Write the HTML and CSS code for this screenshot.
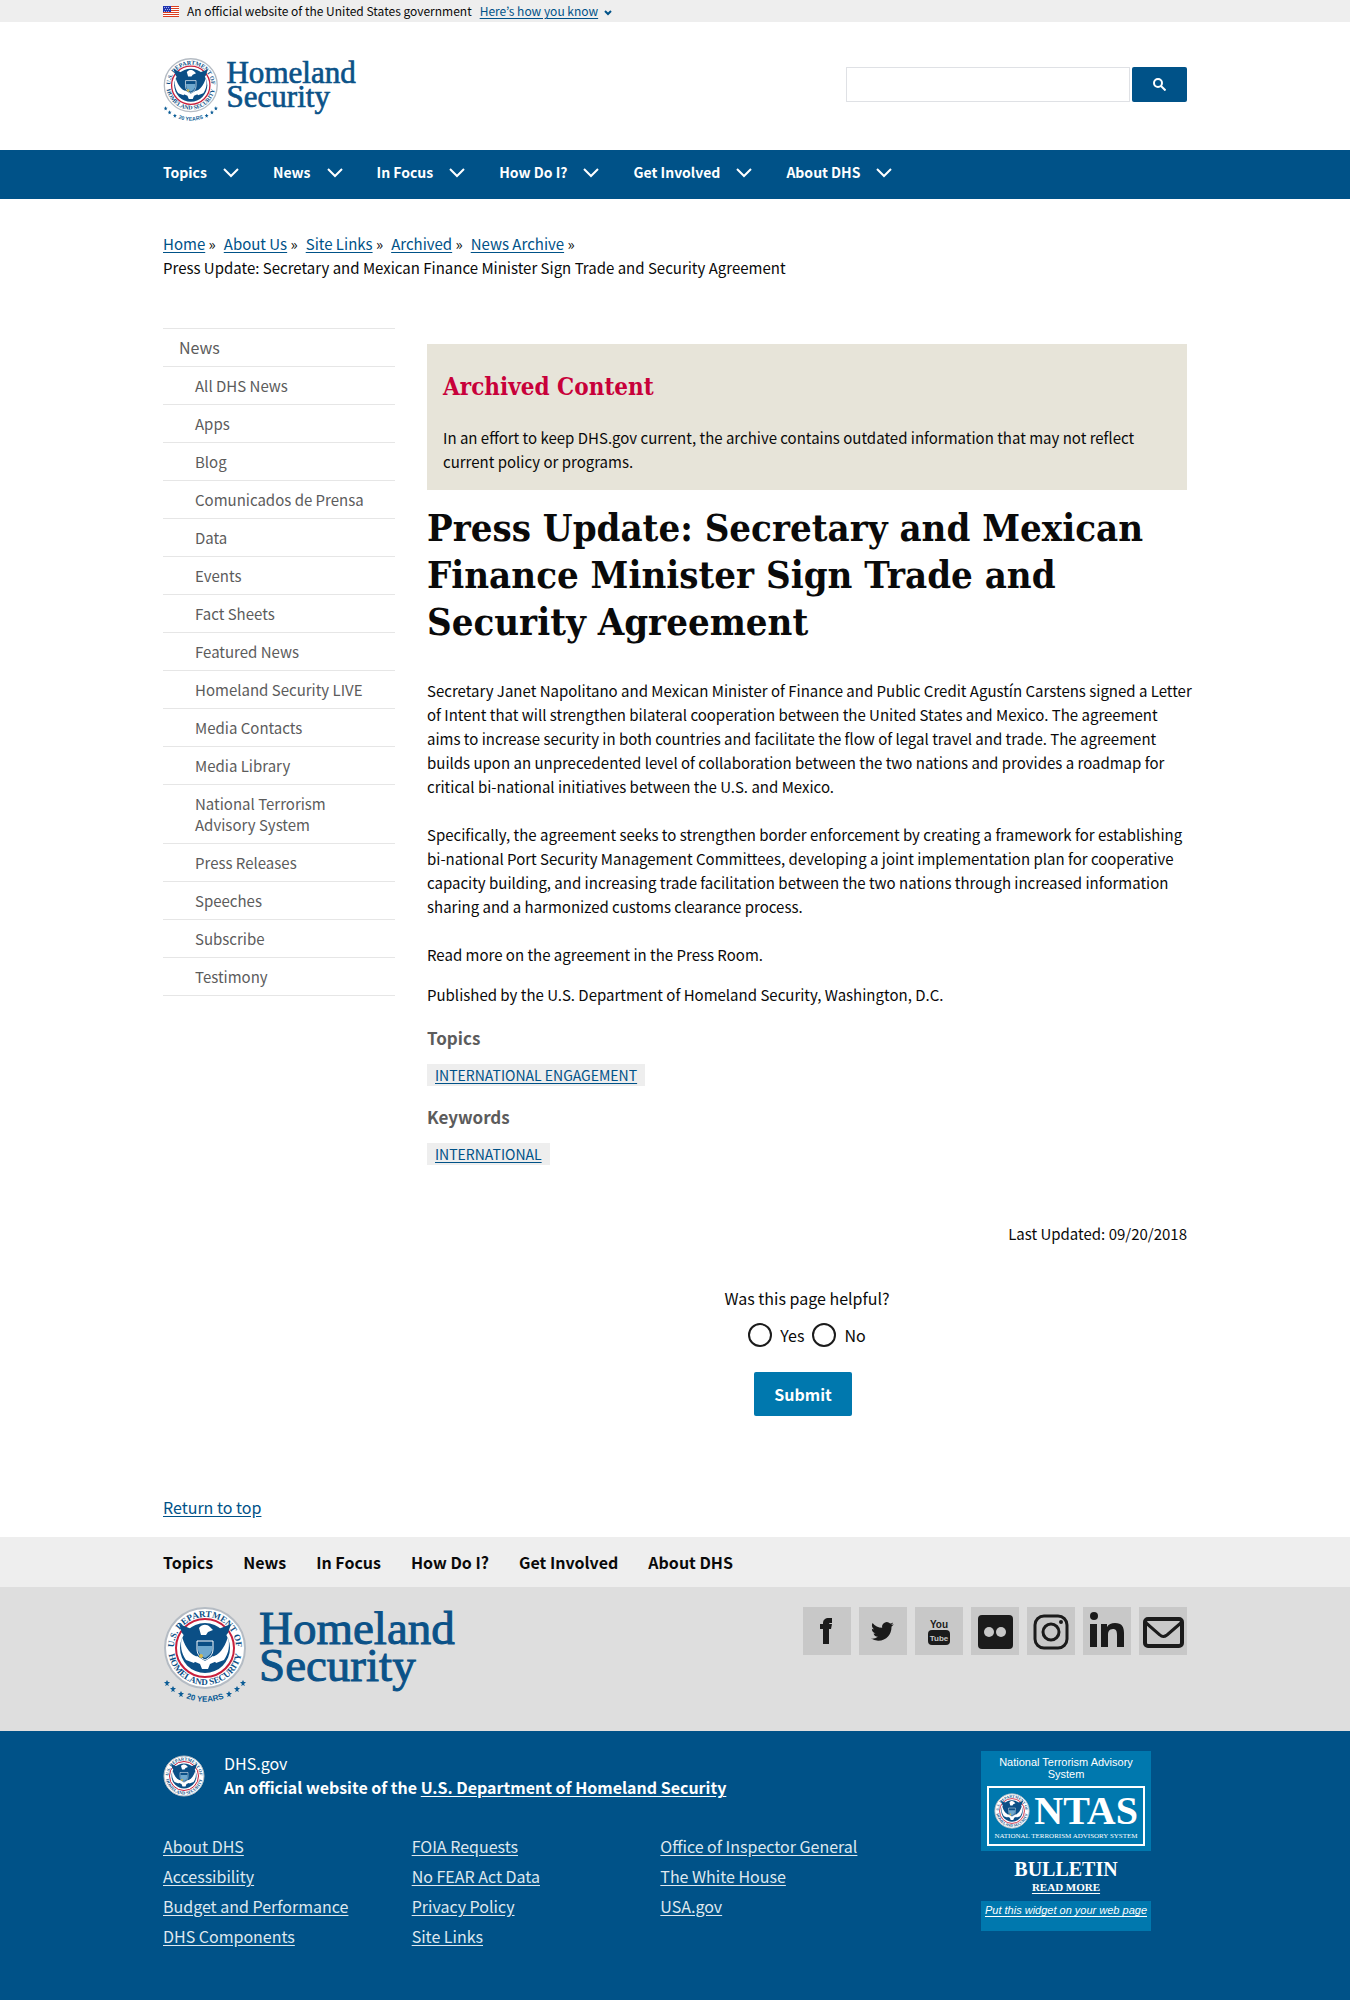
FILE: index.html
```html
<!DOCTYPE html>
<html lang="en">
<head>
<meta charset="utf-8">
<meta name="viewport" content="width=device-width, initial-scale=1">
<title>Press Update: Secretary and Mexican Finance Minister Sign Trade and Security Agreement | Homeland Security</title>
<link rel="stylesheet" href="styles.css">
</head>
<body>
<div class="gov-banner">
  <div class="container gov-inner">
    <svg class="flag" viewBox="0 0 16 11" aria-hidden="true">
      <path fill="#fff" d="M0 0h16v11H0z"/>
      <path fill="#db3e1f" d="M0 0h16v1H0zM0 2h16v1H0zM0 4h16v1H0zM0 6h16v1H0zM0 8h16v1H0zM0 10h16v1H0z"/>
      <path fill="#1e33b1" d="M0 0h8v6H0z"/>
      <path stroke="#fff" stroke-dasharray="1 1" d="M1 1.500h6M2 3.500h5M1 5.500h6" opacity=".6"/>
    </svg>
    <span>An official website of the United States government</span>
    <button type="button" class="gov-toggle">Here’s how you know<svg class="gov-chevron" viewBox="0 0 8 6" aria-hidden="true"><path d="M1 1l3 3 3-3" fill="none" stroke="currentColor" stroke-width="2"/></svg></button>
  </div>
</div>

<header class="site-header">
  <div class="container header-inner">
    <a href="#" aria-label="Homeland Security home">
      <svg class="header-logo" viewBox="0 0 292 98" role="img" aria-label="Homeland Security">
        <defs>
          <path id="arc-top" d="M11 41a31 31 0 0 1 62 0"/>
          <path id="arc-bottom" d="M5 41a37 37 0 0 0 74 0"/>
          <path id="arc-years" d="M2 77a54 54 0 0 0 80 0"/>
          <path id="star" d="M0-3l1 2h2l-2 2 1 2-2-1-2 1 1-2-2-2h2z"/>
          <path id="chevron" d="M1 1l7 7 7-7"/>
        </defs>
        <g id="logo">
          <g id="seal">
            <circle cx="42" cy="41" r="40" fill="#fff" stroke="#b5bcc4" stroke-width="2"/>
            <circle cx="42" cy="41" r="29" fill="#fff" stroke="#c8203c" stroke-width="2"/>
            <circle cx="42" cy="41" r="25" fill="#0b4f86"/>
            <text class="seal-text"><textPath href="#arc-top" startOffset="50%">U.S. DEPARTMENT OF</textPath></text>
            <text class="seal-text"><textPath href="#arc-bottom" startOffset="50%">HOMELAND SECURITY</textPath></text>
            <path fill="#fff" d="M19 30c4 12 9 18 16 20l-4 6-8-3c-5-7-6-15-4-23zM65 30c-4 12-9 18-16 20l4 6 8-3c5-7 6-15 4-23z"/>
            <path fill="#0b4f86" d="M16 17l3 9 5 6 9 9h18l9-9 5-6 3-9-15 6-5-4H36l-5 4z"/>
            <path fill="#fff" d="M36 21c3-4 8-4 11-1l3 3-5 2-2 3h-5z"/>
            <path fill="#0b4f86" stroke="#fff" d="M34 34h16v8c0 6-4 9-8 11-4-2-8-5-8-11z"/>
            <path fill="#6fa8ce" d="M35 39h14v3c0 4-3 7-7 9-4-2-7-5-7-9z"/>
            <path fill="#fff" d="M34 49l8 5 8-5 4 5-7 3-2 5h-6l-2-5-7-3z"/>
            <circle cx="38" cy="49" r="2" fill="#d5b84b"/>
          </g>
          <g fill="#0b5c96">
            <use href="#star" x="4" y="76"/><use href="#star" x="10" y="82"/><use href="#star" x="18" y="87"/>
            <use href="#star" x="66" y="87"/><use href="#star" x="74" y="82"/><use href="#star" x="80" y="76"/>
          </g>
          <text class="logo-years"><textPath href="#arc-years" startOffset="50%">20 YEARS</textPath></text>
          <text class="logo-name" x="96" y="37">Homeland</text>
          <text class="logo-name" x="96" y="74">Security</text>
        </g>
      </svg>
    </a>
    <form class="search">
      <input type="search" class="search-input" aria-label="Search">
      <button type="submit" class="search-button" aria-label="Search">
        <svg class="search-icon" viewBox="0 0 13 13" aria-hidden="true"><circle cx="5" cy="5" r="4" fill="none" stroke="#fff" stroke-width="2"/><path d="M8 8l4.500 4.500" stroke="#fff" stroke-width="2"/></svg>
      </button>
    </form>
  </div>
</header>

<nav class="main-nav" aria-label="Main">
  <div class="container nav-inner">
    <button type="button" class="nav-button">Topics<svg class="nav-chevron"><use href="#chevron"/></svg></button>
    <button type="button" class="nav-button">News<svg class="nav-chevron"><use href="#chevron"/></svg></button>
    <button type="button" class="nav-button">In Focus<svg class="nav-chevron"><use href="#chevron"/></svg></button>
    <button type="button" class="nav-button">How Do I?<svg class="nav-chevron"><use href="#chevron"/></svg></button>
    <button type="button" class="nav-button">Get Involved<svg class="nav-chevron"><use href="#chevron"/></svg></button>
    <button type="button" class="nav-button">About DHS<svg class="nav-chevron"><use href="#chevron"/></svg></button>
  </div>
</nav>

<div class="container">
  <nav class="breadcrumb" aria-label="Breadcrumb">
    <ol class="crumbs">
      <li><a href="#">Home</a> »</li>
      <li><a href="#">About Us</a> »</li>
      <li><a href="#">Site Links</a> »</li>
      <li><a href="#">Archived</a> »</li>
      <li><a href="#">News Archive</a> »</li>
      <li class="current">Press Update: Secretary and Mexican Finance Minister Sign Trade and Security Agreement</li>
    </ol>
  </nav>

  <div class="columns">
    <nav class="sidebar" aria-label="News section">
      <a class="side-parent" href="#">News</a>
      <ul class="side-list">
        <li><a href="#">All DHS News</a></li>
        <li><a href="#">Apps</a></li>
        <li><a href="#">Blog</a></li>
        <li><a href="#">Comunicados de Prensa</a></li>
        <li><a href="#">Data</a></li>
        <li><a href="#">Events</a></li>
        <li><a href="#">Fact Sheets</a></li>
        <li><a href="#">Featured News</a></li>
        <li><a href="#">Homeland Security LIVE</a></li>
        <li><a href="#">Media Contacts</a></li>
        <li><a href="#">Media Library</a></li>
        <li><a href="#">National Terrorism Advisory System</a></li>
        <li><a href="#">Press Releases</a></li>
        <li><a href="#">Speeches</a></li>
        <li><a href="#">Subscribe</a></li>
        <li><a href="#">Testimony</a></li>
      </ul>
    </nav>

    <main class="content">
      <section class="archived">
        <h2>Archived Content</h2>
        <p>In an effort to keep DHS.gov current, the archive contains outdated information that may not reflect current policy or programs.</p>
      </section>
      <h1>Press Update: Secretary and Mexican Finance Minister Sign Trade and Security Agreement</h1>
      <div class="article">
        <p>Secretary Janet Napolitano and Mexican Minister of Finance and Public Credit Agustín Carstens signed a Letter<br>of Intent that will strengthen bilateral cooperation between the United States and Mexico. The agreement<br>aims to increase security in both countries and facilitate the flow of legal travel and trade. The agreement<br>builds upon an unprecedented level of collaboration between the two nations and provides a roadmap for<br>critical bi-national initiatives between the U.S. and Mexico.</p>
        <p>Specifically, the agreement seeks to strengthen border enforcement by creating a framework for establishing<br>bi-national Port Security Management Committees, developing a joint implementation plan for cooperative<br>capacity building, and increasing trade facilitation between the two nations through increased information<br>sharing and a harmonized customs clearance process.</p>
        <p>Read more on the agreement in the Press Room.</p>
      </div>
      <p class="published">Published by the U.S. Department of Homeland Security, Washington, D.C.</p>
      <h3 class="tag-title">Topics</h3>
      <a class="tag" href="#">INTERNATIONAL ENGAGEMENT</a>
      <h3 class="tag-title">Keywords</h3>
      <a class="tag" href="#">INTERNATIONAL</a>
      <p class="updated">Last Updated: 09/20/2018</p>
      <form class="feedback">
        <fieldset>
          <legend>Was this page helpful?</legend>
          <div class="options">
            <label><input type="radio" name="helpful" value="yes">Yes</label>
            <label><input type="radio" name="helpful" value="no">No</label>
          </div>
        </fieldset>
        <button type="submit" class="submit">Submit</button>
      </form>
    </main>
  </div>
  <p class="return"><a href="#">Return to top</a></p>
</div>

<footer>
  <nav class="footer-nav" aria-label="Footer">
    <div class="container footer-nav-inner">
      <a href="#">Topics</a><a href="#">News</a><a href="#">In Focus</a><a href="#">How Do I?</a><a href="#">Get Involved</a><a href="#">About DHS</a>
    </div>
  </nav>
  <div class="footer-brand">
    <div class="container brand-inner">
      <svg class="footer-logo" viewBox="0 0 292 98" role="img" aria-label="Homeland Security"><use href="#logo"/></svg>
      <div class="social">
        <a href="#" aria-label="Facebook"><svg viewBox="0 0 48 48"><path d="M20 37V22h-3v-5h3v-1c0-3 2-5 6-5h3v5h-2c-1 0-1 1-1 1h3l-1 5h-2v15z"/></svg></a>
        <a href="#" aria-label="Twitter"><svg viewBox="0 0 48 48"><path transform="translate(12 13) scale(.95)" d="M23.953 4.570a10 10 0 01-2.825.775 4.958 4.958 0 002.163-2.723c-.951.555-2.005.959-3.127 1.184a4.920 4.920 0 00-8.384 4.482C7.690 8.095 4.067 6.130 1.640 3.162a4.822 4.822 0 00-.666 2.475c0 1.710.870 3.213 2.188 4.096a4.904 4.904 0 01-2.228-.616v.060a4.923 4.923 0 003.946 4.827 4.996 4.996 0 01-2.212.085 4.936 4.936 0 004.604 3.417 9.867 9.867 0 01-6.102 2.105c-.390 0-.779-.023-1.170-.067a13.995 13.995 0 007.557 2.209c9.053 0 13.998-7.496 13.998-13.985 0-.210 0-.420-.015-.630A9.935 9.935 0 0024 4.590z"/></svg></a>
        <a href="#" aria-label="YouTube"><svg viewBox="0 0 48 48"><text class="yt" x="24" y="21">You</text><rect x="13" y="23" width="22" height="15" rx="4"/><text class="yt yt-light" x="24" y="34">Tube</text></svg></a>
        <a href="#" aria-label="Flickr"><svg viewBox="0 0 48 48"><rect x="7" y="8" width="35" height="34" rx="4"/><circle cx="18" cy="25" r="5" fill="#c8c8c8"/><circle cx="30" cy="25" r="5" fill="#c8c8c8"/></svg></a>
        <a href="#" aria-label="Instagram"><svg viewBox="0 0 48 48"><g fill="none" stroke="#1b1b1b" stroke-width="3"><rect x="8" y="9" width="32" height="32" rx="9"/><circle cx="24" cy="25" r="8"/></g><circle cx="34" cy="15" r="2"/></svg></a>
        <a href="#" aria-label="LinkedIn"><svg viewBox="0 0 48 48"><circle cx="11" cy="9" r="4"/><path d="M7 17h7v23H7zM18 17h6v3c2-3 4-4 8-4 7 0 9 4 9 10v14h-7V28c0-4-1-6-4-6-4 0-5 3-5 6v12h-7z"/></svg></a>
        <a href="#" aria-label="Email"><svg viewBox="0 0 48 48"><g fill="none" stroke="#1b1b1b" stroke-width="4"><rect x="6" y="12" width="37" height="27" rx="3"/><path d="M6 15l15 13q3 3 7 0l15-13" stroke-width="3"/></g></svg></a>
      </div>
    </div>
  </div>
  <div class="footer-blue">
    <div class="container blue-inner">
      <div class="blue-main">
        <div class="identity">
          <svg class="small-seal" viewBox="0 0 84 82" aria-hidden="true"><use href="#seal"/></svg>
          <div>
            <p>DHS.gov</p>
            <p class="official">An official website of the <a href="#">U.S. Department of Homeland Security</a></p>
          </div>
        </div>
        <div class="links">
          <ul><li><a href="#">About DHS</a></li><li><a href="#">Accessibility</a></li><li><a href="#">Budget and Performance</a></li><li><a href="#">DHS Components</a></li></ul>
          <ul><li><a href="#">FOIA Requests</a></li><li><a href="#">No FEAR Act Data</a></li><li><a href="#">Privacy Policy</a></li><li><a href="#">Site Links</a></li></ul>
          <ul><li><a href="#">Office of Inspector General</a></li><li><a href="#">The White House</a></li><li><a href="#">USA.gov</a></li></ul>
        </div>
      </div>
      <aside class="widget">
        <div class="widget-top">
          <p>National Terrorism Advisory System</p>
          <div class="ntas">
            <div class="ntas-row"><svg class="ntas-seal" viewBox="0 0 84 82" aria-hidden="true"><use href="#seal"/></svg><span class="ntas-name">NTAS</span></div>
            <span class="ntas-caption">NATIONAL TERRORISM ADVISORY SYSTEM</span>
          </div>
        </div>
        <div class="bulletin"><span>BULLETIN</span><a href="#">READ MORE</a></div>
        <div class="widget-bottom"><a href="#">Put this widget on your web page</a></div>
      </aside>
    </div>
  </div>
</footer>
</body>
</html>
```
FILE: styles.css
```css
* { box-sizing: border-box; }

body {
  margin: 0;
  background: #fff;
  color: #0a0a0a;
  font-family: "Noto Sans CJK KR", "Noto Sans CJK SC", "Noto Sans", sans-serif;
  font-size: 15px;
  line-height: 24px;
}

p, ul, ol, h1, h2, h3 { margin: 0; padding: 0; }
ul, ol { list-style: none; }
a { color: #005288; text-underline-offset: 2px; }
button { font-family: inherit; cursor: pointer; }

.seal-text { font: bold 9px "Liberation Serif", serif; fill: #0b4f86; text-anchor: middle; }
.logo-years { font: bold 8px "Liberation Sans", sans-serif; fill: #0b5c96; text-anchor: middle; }
.logo-name { font: 47px "Liberation Serif", serif; fill: #0b5288; stroke: #0b5288; }

.container { max-width: 1088px; margin: 0 auto; padding: 0 32px; }

/* Government banner */
.gov-banner { background: #eee; }
.gov-inner { display: flex; align-items: center; gap: 8px; font-size: 12px; line-height: 22px; }
.flag { width: 16px; height: 11px; }
.gov-toggle { padding: 0; border: 0; background: none; color: #005288; font-size: 12px; line-height: 22px; text-decoration: underline; text-underline-offset: 2px; }
.gov-chevron { width: 8px; height: 6px; margin-left: 6px; vertical-align: middle; }

/* Header */
.header-inner { display: flex; justify-content: space-between; align-items: flex-start; height: 128px; padding-top: 36px; }
.header-logo { display: block; width: 193px; height: 65px; overflow: visible; }
.search { display: flex; gap: 2px; padding-top: 9px; }
.search-input { width: 284px; height: 35px; border: 1px solid #dfe1e5; background: #fff; padding: 0 8px; }
.search-button { width: 55px; height: 35px; border: 0; border-radius: 2px; background: #005288; display: grid; place-items: center; }
.search-icon { width: 13px; height: 13px; }

/* Main navigation */
.main-nav { background: #005288; }
.nav-inner { display: flex; gap: 34px; }
.nav-button { display: flex; align-items: center; gap: 16px; padding: 0 0 4px; border: 0; background: none; color: #fff; font-size: 14px; font-weight: 700; line-height: 45px; }
.nav-chevron { width: 16px; height: 10px; fill: none; stroke: #fff; stroke-width: 2px; }

/* Breadcrumb */
.breadcrumb { padding: 33px 0 48px; }
.crumbs { display: flex; flex-wrap: wrap; column-gap: 8px; }
.crumbs .current { flex-basis: 100%; }

/* Columns */
.columns { display: grid; grid-template-columns: repeat(12, minmax(0, 1fr)); column-gap: 32px; }
.sidebar { grid-column: span 3; }
.content { grid-column: span 9; padding-top: 16px; }
.sidebar a { display: block; color: #5c5c5c; text-decoration: none; line-height: 21px; border-top: 1px solid #e6e6e6; }
.sidebar .side-parent { padding: 8px 16px; font-size: 16px; }
.side-list { border-bottom: 1px solid #e6e6e6; }
.side-list a { padding: 8px 24px 8px 32px; }

/* Content */
.archived { background: #e7e4d9; padding: 27px 16px 16px; margin-bottom: 14px; }
.archived h2 { color: #c8003a; font: bold 24px/32px "DejaVu Serif Condensed", "DejaVu Serif", serif; margin-bottom: 23px; }
h1 { font: bold 38px/47px "DejaVu Serif Condensed", "DejaVu Serif", serif; margin-bottom: 34px; }
.article { margin-right: -8px; }
.article p { margin-bottom: 24px; }
.article p:last-child { margin-bottom: 16px; }
.tag-title { margin: 19px 0 14px; color: #5c5c5c; font-size: 17px; line-height: 24px; }
.tag { display: block; width: fit-content; padding: 0 8px; background: #eee; font-size: 14px; line-height: 22px; }
.updated { margin-top: 57px; text-align: right; }
.feedback { display: flex; flex-direction: column; align-items: center; margin-top: 40px; font-size: 16px; }
.feedback fieldset { margin: 0; padding: 0; border: 0; }
.feedback legend { padding: 0; }
.options { display: flex; justify-content: center; gap: 8px; margin-top: 13px; }
.options label { display: flex; align-items: center; gap: 8px; }
.options input { appearance: none; width: 24px; height: 24px; margin: 0; border: 2px solid #1b1b1b; border-radius: 50%; background: #fff; }
.options input:checked { background: #005288; }
.submit { margin: 25px 8px 0 0; padding: 0 20px; border: 0; border-radius: 2px; background: #0078ae; color: #fff; font-size: 16px; font-weight: 700; line-height: 44px; }
.return { padding: 79px 0 18px; font-size: 16px; }

/* Footer */
.footer-nav { background: #eee; }
.footer-nav-inner { display: flex; gap: 30px; font-size: 16px; font-weight: 700; line-height: 50px; }
.footer-nav a { color: inherit; text-decoration: none; }
.footer-brand { background: #dedede; }
.brand-inner { display: flex; justify-content: space-between; align-items: flex-start; padding-top: 20px; padding-bottom: 26px; }
.footer-logo { width: 292px; height: 98px; overflow: visible; }
.social { display: flex; gap: 8px; }
.social a { display: block; width: 48px; height: 48px; background: #c8c8c8; }
.social svg { display: block; fill: #1b1b1b; }
.yt { font: bold 10px "Liberation Sans", sans-serif; text-anchor: middle; }
.yt-light { font-size: 8px; fill: #c8c8c8; }

.footer-blue { background: #005288; color: #fff; font-size: 16px; }
.footer-blue a { color: inherit; }
.blue-inner { display: flex; padding-top: 20px; padding-bottom: 49px; }
.blue-main { flex: 1; }
.identity { display: flex; gap: 19px; line-height: 24px; }
.small-seal { width: 42px; height: 42px; margin-top: 4px; }
.official { font-weight: 700; }
.links { display: grid; grid-template-columns: repeat(3, 1fr); margin: 32px 72px 0 0; line-height: 30px; color: #dfe8ef; }
.widget { width: 170px; margin: 0 36px 0 0; text-align: center; font: 11px/12px "Liberation Sans", sans-serif; }
.widget-top { background: #0078ae; padding: 5px 6px 4px; height: 100px; }
.ntas { margin-top: 6px; height: 60px; border: 2px solid #fff; padding: 5px 5px 0; }
.ntas-row { display: flex; align-items: center; justify-content: space-between; height: 36px; }
.ntas-seal { width: 36px; height: 36px; }
.ntas-name { font: bold 40px/36px "Liberation Serif", serif; }
.ntas-caption { display: block; margin-top: 3px; font: 7px/8px "Liberation Serif", serif; white-space: nowrap; }
.bulletin { display: flex; flex-direction: column; align-items: center; padding: 8px 0 6px; font: bold 20px/20px "Liberation Serif", serif; }
.bulletin a { font-size: 11px; line-height: 16px; }
.widget-bottom { height: 30px; padding-top: 3px; background: #0078ae; font-style: italic; white-space: nowrap; }
```
